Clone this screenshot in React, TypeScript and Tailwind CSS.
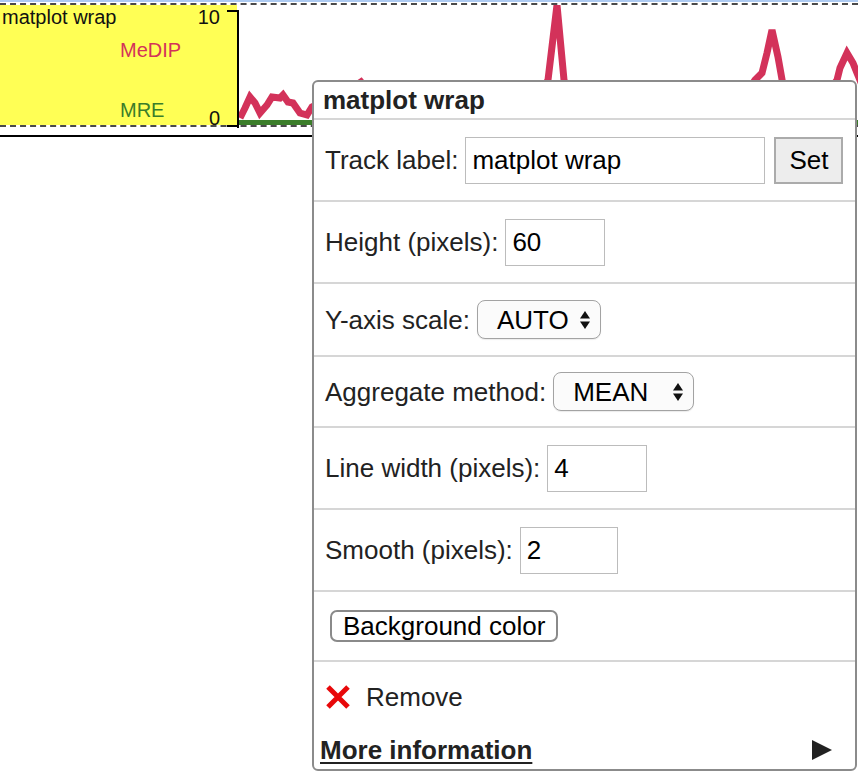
import type { ReactNode } from 'react'

const redPath =
  'M1,113 L6,103 L11,92 L16,98 L21,108 L28,100 L33,92 L41,93 L44,90 L49,97 L54,98 L61,108 L68,110 L73,102 L91,93 L106,88 L122,77 L133,90 L161,100 L211,95 L261,103 L301,90 L309,75 L318,0 L325,75 L331,90 L381,100 L461,95 L506,90 L516,75 L523,68 L528,48 L533,25 L539,52 L544,80 L561,95 L591,85 L598,75 L601,63 L608,48 L614,58 L618,68 L623,80'

function Row({ h, children, pl = 'pl-[11px]' }: { h: string; children: ReactNode; pl?: string }) {
  return <div className={`flex items-center gap-[7px] border-b-2 border-[#d6d6d6] ${h} ${pl}`}>{children}</div>
}

function NumInput({ value, w }: { value: string; w: string }) {
  return (
    <input
      readOnly
      value={value}
      className={`h-[47px] ${w} border border-[#bcbcbc] bg-white px-[6px] text-[26px] text-black outline-none`}
    />
  )
}

function Updown() {
  return (
    <svg width="12" height="20" viewBox="0 0 12 20" className="shrink-0">
      <polygon points="1,8.5 6,1 11,8.5" fill="#111" />
      <polygon points="1,11.5 6,19 11,11.5" fill="#111" />
    </svg>
  )
}

function Select({ value, w }: { value: string; w: string }) {
  return (
    <div
      className={`flex h-[39px] ${w} items-center justify-between rounded-[8px] border border-[#a3a3a3] bg-[#fbfbfb] pl-[19px] pr-[9px] text-black shadow-[0_1px_1px_rgba(0,0,0,0.08)]`}
    >
      <span>{value}</span>
      <Updown />
    </div>
  )
}

export default function App() {
  return (
    <div className="relative h-[774px] w-[858px] overflow-hidden bg-white font-['Liberation_Sans',Arial,Helvetica,sans-serif]">
      {/* ruler edge */}
      <div className="h-[2px] bg-[#aecbf2]" />

      {/* track */}
      <div className="relative mt-[1px] border-y-2 border-dashed border-[#4a4a4a]">
        <div className="flex h-[120px]">
          <div className="flex w-[237px] flex-col bg-[#ffff55] text-[20px] leading-[20px]">
            <div className="flex justify-between pl-[2px] pr-[17px] pt-[2px] text-[#111]">
              <span>matplot wrap</span>
              <span>10</span>
            </div>
            <div className="mt-[13px] pl-[120px] text-[#d3325a]">MeDIP</div>
            <div className="mt-auto flex items-end justify-between pl-[120px] pr-[17px]">
              <span className="mb-[5px] text-[#3b7d2a]">MRE</span>
              <span className="mb-[-3px] text-[#111]">0</span>
            </div>
          </div>
          <svg width="619" height="120" className="ml-[2px] shrink-0">
            <line x1="0" y1="117.5" x2="619" y2="117.5" stroke="#3b7d2a" strokeWidth="5" />
            <path d={redPath} fill="none" stroke="#d3325a" strokeWidth="7" strokeLinejoin="miter" strokeMiterlimit="3" />
          </svg>
        </div>
        <svg width="13" height="124" className="absolute left-[227px] top-0">
          <line x1="11" y1="6" x2="11" y2="123" stroke="#000" strokeWidth="2" />
          <line x1="0" y1="6" x2="12" y2="6" stroke="#000" strokeWidth="2" />
          <line x1="0" y1="121" x2="12" y2="121" stroke="#000" strokeWidth="2" />
        </svg>
      </div>

      <div className="mt-[8px] h-[2px] bg-black" />

      {/* track config menu */}
      <div className="absolute left-[312px] top-[80px] flex h-[691px] w-[545px] flex-col rounded-[6px] border-2 border-[#8b8b8b] bg-white text-[26px] leading-[30px] text-[#222]">
        <div className="flex h-[38px] items-center border-b-2 border-[#d6d6d6] pl-[9px] font-bold">matplot wrap</div>

        <Row h="h-[82px]">
          <span>Track label:</span>
          <NumInput value="matplot wrap" w="w-[300px]" />
          <button className="ml-[2px] h-[47px] w-[69px] border-2 border-[#ababab] bg-[#ededed] text-black">Set</button>
        </Row>

        <Row h="h-[82px]">
          <span>Height (pixels):</span>
          <NumInput value="60" w="w-[100px]" />
        </Row>

        <Row h="h-[73px]">
          <span>Y-axis scale:</span>
          <Select value="AUTO" w="w-[124px]" />
        </Row>

        <Row h="h-[71px]">
          <span>Aggregate method:</span>
          <Select value="MEAN" w="w-[141px]" />
        </Row>

        <Row h="h-[82px]">
          <span>Line width (pixels):</span>
          <NumInput value="4" w="w-[100px]" />
        </Row>

        <Row h="h-[82px]">
          <span>Smooth (pixels):</span>
          <NumInput value="2" w="w-[98px]" />
        </Row>

        <Row h="h-[70px]" pl="pl-[16px]">
          <button className="h-[32px] rounded-[7px] border-2 border-[#8a8a8a] bg-white px-[11px] leading-[26px] text-black">
            Background color
          </button>
        </Row>

        <div className="flex h-[70px] items-center gap-[15px] pl-[11px]">
          <svg width="26" height="26" viewBox="0 0 26 26">
            <path d="M3,3 L23,23 M23,3 L3,23" stroke="#e8080a" strokeWidth="5" />
          </svg>
          <span>Remove</span>
        </div>

        <div className="flex h-[36px] items-center justify-between pl-[6px] pr-[22px]">
          <a className="font-bold underline decoration-2 underline-offset-[3px]">More information</a>
          <svg width="22" height="22" viewBox="0 0 22 22">
            <polygon points="1,1 21,11 1,21" fill="#222" />
          </svg>
        </div>
      </div>
    </div>
  )
}
